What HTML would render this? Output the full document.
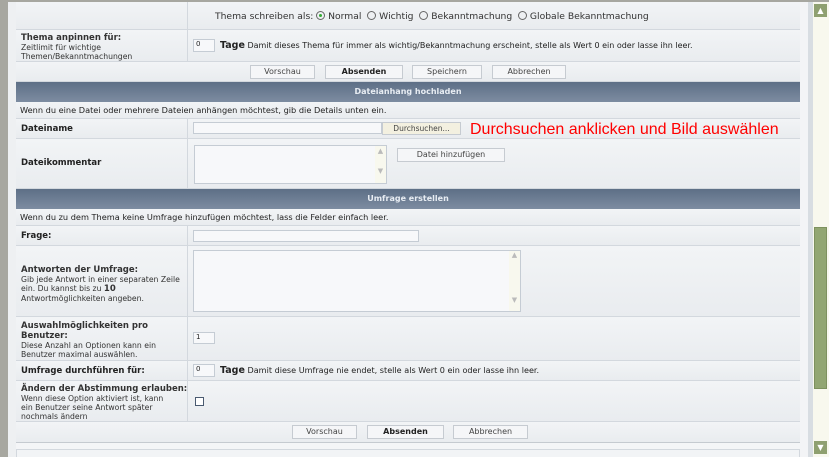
<!DOCTYPE html>
<html><head><meta charset="utf-8"><style>
*{margin:0;padding:0;box-sizing:border-box}
body{width:829px;height:457px;overflow:hidden;background:#f4f5f7;font-family:"DejaVu Sans","Liberation Sans",sans-serif;font-size:7.5px;color:#222;position:relative}
.a{position:absolute}
.row{position:absolute;left:16px;width:784px;border-bottom:1px solid #d3d8de;background:linear-gradient(#f2f4f6,#e9ecef)}
.lab{position:absolute;left:16px;width:172px;border-right:1px solid #d3d8de}
.hd{position:absolute;left:16px;width:784px;height:20px;background:linear-gradient(#5d6f86,#7d8ca1);color:#e8edf3;font-weight:bold;font-size:8px;text-align:center;line-height:20px}
b{font-size:8.5px}
.inp{position:absolute;background:#f7f8fa;border:1px solid #c5ccd4}
.btn{position:absolute;height:14px;background:#f5f6f8;border:1px solid #c6cbd1;text-align:center;line-height:12px;font-size:8px;color:#444}
.small{font-size:7.7px;line-height:9px;color:#333}
.r{display:inline-block;width:9px;height:9px;border:1px solid #666;border-radius:50%;vertical-align:-1px;position:relative}
</style></head><body>
<div class="a" style="left:0;top:0;width:8px;height:457px;background:#a7a7a0"></div>
<div class="a" style="left:0;top:0;width:829px;height:2px;background:#a7a7a0"></div>
<div class="a" style="left:8px;top:2px;width:8px;height:455px;background:#eef0f2"></div>
<div class="a" style="left:800px;top:2px;width:8px;height:455px;background:#f3f4f6"></div>
<div class="a" style="left:808px;top:2px;width:5px;height:455px;background:#d8dde2"></div>
<div class="a" style="left:813px;top:2px;width:16px;height:455px;background:#f8f8ee"></div>
<div class="a" style="left:814px;top:4px;width:13px;height:13px;background:#8fa070;color:#fff;font-size:8px;text-align:center;line-height:13px">▲</div>
<div class="a" style="left:814px;top:227px;width:13px;height:162px;background:#92a672;border:1px solid #7d915e"></div>
<div class="a" style="left:814px;top:441px;width:13px;height:13px;background:#8fa070;color:#fff;font-size:8px;text-align:center;line-height:13px">▼</div>

<div class="row" style="top:2px;height:28px"></div>
<div class="lab" style="top:2px;height:28px"></div>
<div class="a" style="left:215px;top:11px;font-size:9.2px;color:#333;white-space:nowrap">Thema schreiben als: <span class="r"><span style="position:absolute;left:2px;top:2px;width:3px;height:3px;background:#3a3;border-radius:50%"></span></span> Normal &nbsp;<span class="r"></span> Wichtig &nbsp;<span class="r"></span> Bekanntmachung &nbsp;<span class="r"></span> Globale Bekanntmachung</div>

<div class="row" style="top:30px;height:32px"></div>
<div class="lab" style="top:30px;height:32px"></div>
<div class="a small" style="left:21px;top:33px"><b>Thema anpinnen für:</b><br>Zeitlimit für wichtige<br>Themen/Bekanntmachungen</div>
<div class="inp" style="left:193px;top:39px;width:22px;height:13px;font-size:7px;padding-left:2px">0</div>
<div class="a" style="left:220px;top:40px;white-space:nowrap;font-size:8px"><b style="font-size:9.5px">Tage</b> Damit dieses Thema für immer als wichtig/Bekanntmachung erscheint, stelle als Wert 0 ein oder lasse ihn leer.</div>

<div class="row" style="top:62px;height:20px"></div>
<div class="btn" style="left:250px;top:65px;width:65px">Vorschau</div>
<div class="btn" style="left:325px;top:65px;width:78px;font-weight:bold;color:#222">Absenden</div>
<div class="btn" style="left:412px;top:65px;width:70px">Speichern</div>
<div class="btn" style="left:492px;top:65px;width:74px">Abbrechen</div>

<div class="hd" style="top:82px">Dateianhang hochladen</div>
<div class="row" style="top:102px;height:17px"></div>
<div class="a" style="left:20px;top:105px;font-size:8.2px;white-space:nowrap">Wenn du eine Datei oder mehrere Dateien anhängen möchtest, gib die Details unten ein.</div>
<div class="row" style="top:119px;height:20px"></div>
<div class="lab" style="top:119px;height:20px"></div>
<div class="a" style="left:21px;top:124px"><b>Dateiname</b></div>
<div class="inp" style="left:193px;top:122px;width:189px;height:12px"></div>
<div class="btn" style="left:382px;top:122px;width:79px;height:13px;background:#f3f0e0;line-height:11px;font-size:7.5px">Durchsuchen...</div>
<div class="a" style="left:470px;top:121px;font-family:'Liberation Sans',sans-serif;font-size:16px;color:#f00;white-space:nowrap">Durchsuchen anklicken und Bild auswählen</div>
<div class="row" style="top:139px;height:50px"></div>
<div class="lab" style="top:139px;height:50px"></div>
<div class="a" style="left:21px;top:158px"><b>Dateikommentar</b></div>
<div class="inp" style="left:194px;top:145px;width:193px;height:39px"></div>
<div class="a" style="left:375px;top:146px;width:11px;height:37px;background:#f8f8ee;color:#bbb;font-size:7px;text-align:center;line-height:10px">▲<br><br>▼</div>
<div class="btn" style="left:397px;top:148px;width:108px">Datei hinzufügen</div>

<div class="hd" style="top:189px">Umfrage erstellen</div>
<div class="row" style="top:209px;height:17px"></div>
<div class="a" style="left:20px;top:212px;font-size:8.2px;white-space:nowrap">Wenn du zu dem Thema keine Umfrage hinzufügen möchtest, lass die Felder einfach leer.</div>
<div class="row" style="top:226px;height:20px"></div>
<div class="lab" style="top:226px;height:20px"></div>
<div class="a" style="left:21px;top:231px"><b>Frage:</b></div>
<div class="inp" style="left:193px;top:230px;width:226px;height:12px"></div>
<div class="row" style="top:246px;height:71px"></div>
<div class="lab" style="top:246px;height:71px"></div>
<div class="a small" style="left:21px;top:265px"><b>Antworten der Umfrage:</b><br>Gib jede Antwort in einer separaten Zeile<br>ein. Du kannst bis zu <b>10</b><br>Antwortmöglichkeiten angeben.</div>
<div class="inp" style="left:193px;top:250px;width:328px;height:62px"></div>
<div class="a" style="left:509px;top:251px;width:11px;height:60px;background:#f8f8ee;color:#bbb;font-size:7px;text-align:center;line-height:9px">▲<br><br><br><br><br>▼</div>
<div class="row" style="top:317px;height:44px"></div>
<div class="lab" style="top:317px;height:44px"></div>
<div class="a small" style="left:21px;top:321px"><b>Auswahlmöglichkeiten pro<br>Benutzer:</b><br>Diese Anzahl an Optionen kann ein<br>Benutzer maximal auswählen.</div>
<div class="inp" style="left:193px;top:332px;width:22px;height:12px;font-size:7px;padding-left:2px">1</div>
<div class="row" style="top:361px;height:20px"></div>
<div class="lab" style="top:361px;height:20px"></div>
<div class="a" style="left:21px;top:366px"><b>Umfrage durchführen für:</b></div>
<div class="inp" style="left:193px;top:364px;width:22px;height:13px;font-size:7px;padding-left:2px">0</div>
<div class="a" style="left:220px;top:365px;white-space:nowrap;font-size:8.1px"><b style="font-size:9.5px">Tage</b> Damit diese Umfrage nie endet, stelle als Wert 0 ein oder lasse ihn leer.</div>
<div class="row" style="top:381px;height:41px"></div>
<div class="lab" style="top:381px;height:41px"></div>
<div class="a small" style="left:21px;top:384px"><b>Ändern der Abstimmung erlauben:</b><br>Wenn diese Option aktiviert ist, kann<br>ein Benutzer seine Antwort später<br>nochmals ändern</div>
<div class="a" style="left:195px;top:397px;width:9px;height:9px;border:1px solid #4a5a70;background:#fff"></div>
<div class="row" style="top:422px;height:21px;border-bottom:1px solid #c5cad0"></div>
<div class="btn" style="left:292px;top:425px;width:65px">Vorschau</div>
<div class="btn" style="left:367px;top:425px;width:77px;font-weight:bold;color:#222">Absenden</div>
<div class="btn" style="left:453px;top:425px;width:75px">Abbrechen</div>
<div class="a" style="left:16px;top:449px;width:784px;height:8px;border:1px solid #d3d8de;border-bottom:none;background:#f2f4f6"></div>
</body></html>
